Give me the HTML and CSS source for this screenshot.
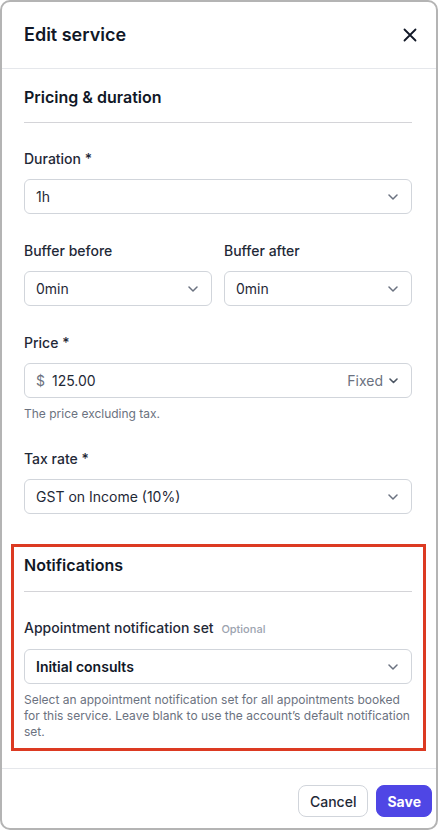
FILE: index.html
```html
<!DOCTYPE html>
<html lang="en">
<head>
<meta charset="utf-8">
<title>Edit service</title>
<link rel="stylesheet" href="styles.css">
</head>
<body>
<div class="modal">
  <header class="modal-header">
    <h2 class="modal-title">Edit service</h2>
    <button class="close-btn" aria-label="Close">
      <svg width="14" height="14" viewBox="0 0 14 14"><path d="M1.5 1.5l11 11M12.5 1.5l-11 11" stroke="#111827" stroke-width="1.8" stroke-linecap="round"/></svg>
    </button>
  </header>
  <div class="modal-body">
    <section class="section">
      <h3 class="section-title">Pricing &amp; duration</h3>
      <div class="divider"></div>
      <div class="field">
        <label class="label">Duration *</label>
        <div class="select"><span>1h</span><svg class="chev" width="10" height="6" viewBox="0 0 10 6"><path d="M1 1l4 4 4-4" fill="none" stroke="#6b7280" stroke-width="1.5" stroke-linecap="round" stroke-linejoin="round"/></svg></div>
      </div>
      <div class="field row">
        <div class="col">
          <label class="label">Buffer before</label>
          <div class="select"><span>0min</span><svg class="chev" width="10" height="6" viewBox="0 0 10 6"><path d="M1 1l4 4 4-4" fill="none" stroke="#6b7280" stroke-width="1.5" stroke-linecap="round" stroke-linejoin="round"/></svg></div>
        </div>
        <div class="col">
          <label class="label">Buffer after</label>
          <div class="select"><span>0min</span><svg class="chev" width="10" height="6" viewBox="0 0 10 6"><path d="M1 1l4 4 4-4" fill="none" stroke="#6b7280" stroke-width="1.5" stroke-linecap="round" stroke-linejoin="round"/></svg></div>
        </div>
      </div>
      <div class="field">
        <label class="label">Price *</label>
        <div class="select price">
          <span class="currency">$</span>
          <span class="amount">125.00</span>
          <span class="price-type">Fixed<svg width="9" height="6" viewBox="0 0 9 6"><path d="M1 1l3.5 3.5L8 1" fill="none" stroke="#4b5563" stroke-width="1.6" stroke-linecap="round" stroke-linejoin="round"/></svg></span>
        </div>
        <p class="hint">The price excluding tax.</p>
      </div>
      <div class="field">
        <label class="label">Tax rate *</label>
        <div class="select"><span>GST on Income (10%)</span><svg class="chev" width="10" height="6" viewBox="0 0 10 6"><path d="M1 1l4 4 4-4" fill="none" stroke="#6b7280" stroke-width="1.5" stroke-linecap="round" stroke-linejoin="round"/></svg></div>
      </div>
    </section>
    <section class="section highlighted">
      <h3 class="section-title">Notifications</h3>
      <div class="divider"></div>
      <div class="field">
        <label class="label">Appointment notification set <span class="optional">Optional</span></label>
        <div class="select strong"><span>Initial consults</span><svg class="chev" width="10" height="6" viewBox="0 0 10 6"><path d="M1 1l4 4 4-4" fill="none" stroke="#6b7280" stroke-width="1.5" stroke-linecap="round" stroke-linejoin="round"/></svg></div>
        <p class="hint help">Select an appointment notification set for all appointments booked for this service. Leave blank to use the account’s default notification set.</p>
      </div>
    </section>
  </div>
  <footer class="modal-footer">
    <button class="btn btn-secondary">Cancel</button>
    <button class="btn btn-primary">Save</button>
  </footer>
</div>
</body>
</html>
```
FILE: styles.css
```css
* { box-sizing: border-box; }
html, body { margin: 0; padding: 0; background: #fff; }
body {
  font-family: Inter, "Noto Sans", "Liberation Sans", sans-serif;
  color: #1f2937;
}
.modal {
  width: 438px;
  height: 830px;
  border: 2px solid #b4b4b4;
  border-radius: 10px;
  background: #fff;
  display: flex;
  flex-direction: column;
  overflow: hidden;
}
.modal-header {
  height: 67px;
  border-bottom: 1px solid #e5e7eb;
  display: flex;
  align-items: center;
  justify-content: space-between;
  padding: 0 17px 0 22px;
  flex-shrink: 0;
}
.modal-title {
  margin: 0;
  font-size: 18px;
  font-weight: 600;
  color: #111827;
  line-height: 24px;
}
.close-btn {
  border: 0;
  background: none;
  padding: 2px;
  display: flex;
  cursor: pointer;
}
.modal-body {
  padding: 0 24px 0 22px;
}
.section {
  padding-top: 16px;
}
.section-title {
  margin: 0;
  font-size: 16px;
  font-weight: 600;
  line-height: 24px;
  color: #111827;
}
.divider {
  height: 1px;
  background: #d4d4d8;
  margin-top: 13px;
}
.field {
  margin-top: 26px;
}
.field + .field {
  margin-top: 27px;
}
.row {
  display: grid;
  grid-template-columns: 1fr 1fr;
  gap: 12px;
}
.label {
  display: block;
  font-size: 14px;
  font-weight: 500;
  line-height: 20px;
  color: #1f2937;
  margin-bottom: 10px;
}
.optional {
  font-size: 11px;
  font-weight: 500;
  color: #9ca3af;
  margin-left: 4px;
}
.select {
  height: 35px;
  border: 1px solid #d1d5db;
  border-radius: 6px;
  display: flex;
  align-items: center;
  justify-content: space-between;
  padding: 0 13px 0 11px;
  font-size: 14px;
  color: #1f2937;
  background: #fff;
}
.select.strong {
  font-weight: 600;
  color: #111827;
}
.select.price {
  justify-content: flex-start;
  padding-right: 13px;
}
.currency {
  color: #6b7280;
  margin-right: 7px;
}
.amount {
  flex: 1;
}
.price-type {
  color: #6b7280;
  display: flex;
  align-items: center;
  gap: 6px;
}
.hint {
  margin: 8px 0 0;
  font-size: 12px;
  line-height: 16px;
  color: #6b7280;
}
.highlighted {
  margin: 30px -14px 0 -13px;
  border: 3px solid #dc3a22;
  padding: 6px 11px 8px 10px;
}
.highlighted .divider {
  margin-top: 14px;
}
.highlighted .field {
  margin-top: 26px;
}
.modal-footer {
  margin-top: auto;
  border-top: 1px solid #e5e7eb;
  padding: 16px 4px 11px 0;
  display: flex;
  justify-content: flex-end;
  gap: 8px;
}
.btn {
  height: 32px;
  border-radius: 8px;
  font-family: inherit;
  font-size: 14px;
  font-weight: 600;
  padding: 0 12px;
  cursor: pointer;
}
.btn-secondary {
  background: #fff;
  border: 1px solid #d1d5db;
  color: #1f2937;
  font-weight: 500;
  padding: 0 11px;
}
.btn-primary {
  background: #4f46e5;
  border: 1px solid #4f46e5;
  color: #fff;
  font-weight: 700;
  padding: 0 10px;
}
```
